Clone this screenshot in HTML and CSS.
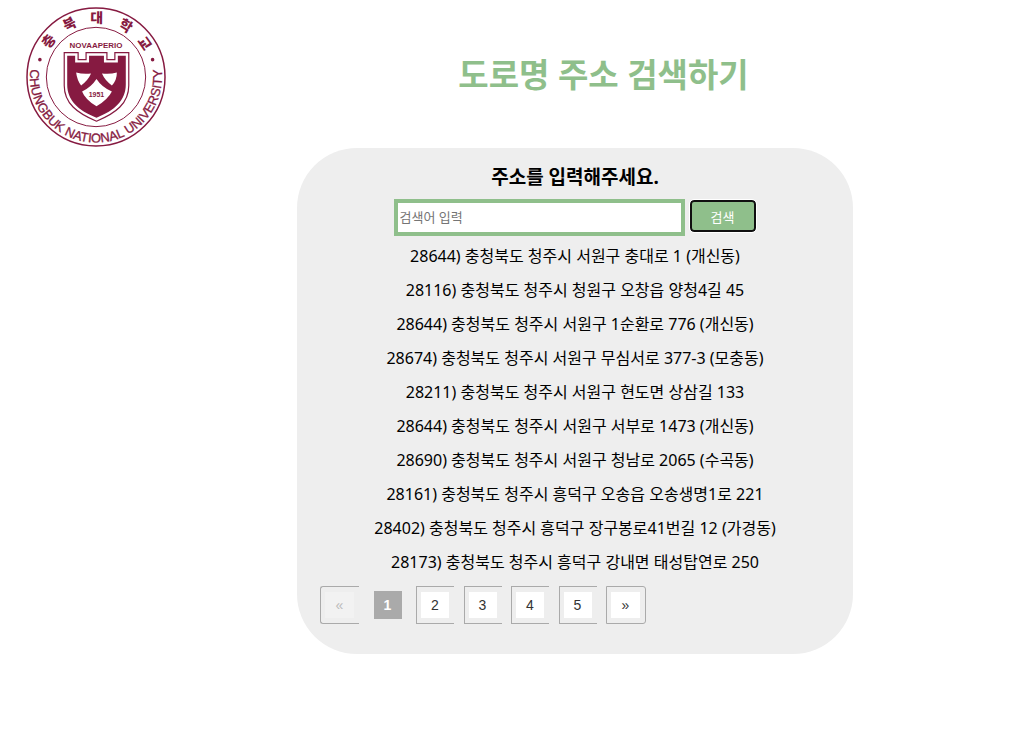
FILE: index.html
```html
<!DOCTYPE html>
<html lang="ko">
<head>
<meta charset="utf-8">
<title>도로명 주소 검색하기</title>
<link rel="stylesheet" href="styles.css">
</head>
<body>
<header class="header">
  <svg class="logo" viewBox="0 0 142 142" role="img" aria-label="충북대학교">
    <defs>
      <path id="arc-top" d="M16 71A55 55 0 0 1 126 71"/>
      <path id="arc-bottom" d="M7 52A66.500 66.500 0 1 0 135 52"/>
    </defs>
    <circle class="ring" cx="71" cy="70.500" r="69.500" stroke-width="1.500"/>
    <circle class="ring" cx="71" cy="70.500" r="50" stroke-width="1"/>
    <text class="logo-ko"><textPath href="#arc-top" startOffset="36" text-anchor="middle">충</textPath></text>
    <text class="logo-ko"><textPath href="#arc-top" startOffset="61" text-anchor="middle">북</textPath></text>
    <text class="logo-ko"><textPath href="#arc-top" startOffset="87" text-anchor="middle">대</textPath></text>
    <text class="logo-ko"><textPath href="#arc-top" startOffset="115" text-anchor="middle">학</textPath></text>
    <text class="logo-ko"><textPath href="#arc-top" startOffset="139" text-anchor="middle">교</textPath></text>
    <text class="logo-en"><textPath href="#arc-bottom" startOffset="50%" text-anchor="middle">CHUNGBUK NATIONAL UNIVERSITY</textPath></text>
    <circle class="solid" cx="14.500" cy="53" r="1.800"/>
    <circle class="solid" cx="128" cy="53" r="1.800"/>
    <text class="logo-motto" x="71" y="41" text-anchor="middle">NOVAAPERIO</text>
    <path class="ring" stroke-width="1.200" d="M39 46H53V53H61V46H82V53H90V46H104V79C104 97 91 107 71.500 115C52 107 39 97 39 79Z"/>
    <path class="solid" d="M42 49H50V56H64V49H79V56H93V49H101V78C101 94 90 104 71.500 111.500C53 104 42 94 42 78Z"/>
    <path class="cut" d="M51 66Q58 68 66 67Q63 74 56 79Q52 74 51 66ZM77 67Q85 68 92 66Q92 74 87 79Q80 74 77 67Z"/>
    <path class="cut" d="M71.500 72.500Q77 81 87 85Q83 93 71.500 100Q60 93 57 85Q66 81 71.500 72.500Z"/>
    <text class="logo-year" x="71.500" y="90.500" text-anchor="middle">1951</text>
  </svg>
  <h1 class="title">도로명 주소 검색하기</h1>
</header>
<main class="main">
  <section class="card">
    <form class="search">
      <label class="prompt" for="keyword">주소를 입력해주세요.</label>
      <div class="search-row">
        <input class="keyword" id="keyword" type="text" placeholder="검색어 입력">
        <button class="submit" type="button">검색</button>
      </div>
    </form>
    <ul class="results">
      <li>28644) 충청북도 청주시 서원구 충대로 1 (개신동)</li>
      <li>28116) 충청북도 청주시 청원구 오창읍 양청4길 45</li>
      <li>28644) 충청북도 청주시 서원구 1순환로 776 (개신동)</li>
      <li>28674) 충청북도 청주시 서원구 무심서로 377-3 (모충동)</li>
      <li>28211) 충청북도 청주시 서원구 현도면 상삼길 133</li>
      <li>28644) 충청북도 청주시 서원구 서부로 1473 (개신동)</li>
      <li>28690) 충청북도 청주시 서원구 청남로 2065 (수곡동)</li>
      <li>28161) 충청북도 청주시 흥덕구 오송읍 오송생명1로 221</li>
      <li>28402) 충청북도 청주시 흥덕구 장구봉로41번길 12 (가경동)</li>
      <li>28173) 충청북도 청주시 흥덕구 강내면 태성탑연로 250</li>
    </ul>
    <nav class="pages" aria-label="페이지">
      <button class="page prev" type="button" disabled><span>«</span></button>
      <button class="page active" type="button" aria-current="page"><span>1</span></button>
      <button class="page" type="button"><span>2</span></button>
      <button class="page" type="button"><span>3</span></button>
      <button class="page" type="button"><span>4</span></button>
      <button class="page" type="button"><span>5</span></button>
      <button class="page next" type="button"><span>»</span></button>
    </nav>
  </section>
</main>
</body>
</html>
```
FILE: styles.css
```css
* {
  box-sizing: border-box;
}

body {
  margin: 0;
  background: #fff;
  color: #000;
  font-family: "Noto Sans", "Noto Sans CJK KR", sans-serif;
  font-size: 16px;
}

.header {
  display: flex;
  align-items: center;
  padding: 7px 0 0 25px;
}

.logo {
  flex: none;
  width: 142px;
  height: 141px;
  margin-right: 15px;
}

.ring {
  fill: none;
  stroke: #861a41;
}

.solid {
  fill: #861a41;
}

.cut {
  fill: #fff;
}

.logo text {
  fill: #861a41;
  font-family: "Liberation Sans", "Noto Sans CJK KR", sans-serif;
  font-weight: bold;
}

.logo .logo-ko {
  font-size: 14px;
  font-weight: 900;
}

.logo .logo-en {
  font-size: 13px;
  font-weight: normal;
  stroke: #861a41;
  stroke-width: 0.3px;
}

.logo .logo-motto {
  font-size: 8px;
}

.logo .logo-year {
  font-size: 7px;
}

.title {
  flex: 1;
  margin: 0;
  padding-bottom: 6px;
  color: #8fbf8b;
  font-size: 33px;
  line-height: 44px;
  text-align: center;
}

.main {
  display: flex;
  justify-content: center;
  padding-left: 125px;
}

.card {
  width: 100%;
  max-width: 556px;
  padding: 16px 23px 30px;
  border-radius: 60px;
  background: #eee;
}

.search {
  display: flex;
  flex-direction: column;
  align-items: center;
  gap: 8px;
}

.prompt {
  font-size: 19px;
  font-weight: bold;
  line-height: 27px;
}

.search-row {
  display: flex;
  align-items: flex-start;
  gap: 4px;
}

.keyword {
  width: 291px;
  height: 37px;
  padding: 0 2px 2px;
  border: 4px solid #8fbf8b;
  background: #fff;
  font-family: inherit;
  font-size: 13px;
}

.keyword::placeholder {
  color: #757575;
}

.submit {
  width: 66px;
  height: 32px;
  margin: 1px;
  padding: 0;
  border: 2px solid #101010;
  border-radius: 4px;
  outline: 1px solid #fff;
  background: #8fbf8b;
  color: #fff;
  font-family: inherit;
  font-size: 13px;
}

.results {
  margin: 3px 0 0;
  padding: 0;
  list-style: none;
  line-height: 34px;
  text-align: center;
}

.pages {
  display: flex;
  justify-content: space-between;
  max-width: 326px;
  margin-top: 7px;
}

.page {
  display: flex;
  width: 38px;
  height: 38px;
  padding: 5px 5px 5px 4px;
  border: 1px solid #aaa;
  border-right: 0;
  background: none;
  color: #333;
  font-family: "Liberation Sans", Arial, sans-serif;
  font-size: 14px;
}

.page span {
  flex: 1;
  background: #fff;
  line-height: 26px;
}

.page.active {
  padding: 4px 5px 4px 4px;
  border-color: transparent;
  color: #fff;
  font-weight: bold;
}

.page.active span {
  background: #aaa;
  line-height: 28px;
}

.prev {
  width: 39px;
  border-radius: 3px 0 0 3px;
  color: #bbb;
}

.prev span {
  background: #f2f2f2;
}

.next {
  width: 40px;
  padding-right: 5px;
  border-right: 1px solid #aaa;
  border-radius: 0 3px 3px 0;
}
```
